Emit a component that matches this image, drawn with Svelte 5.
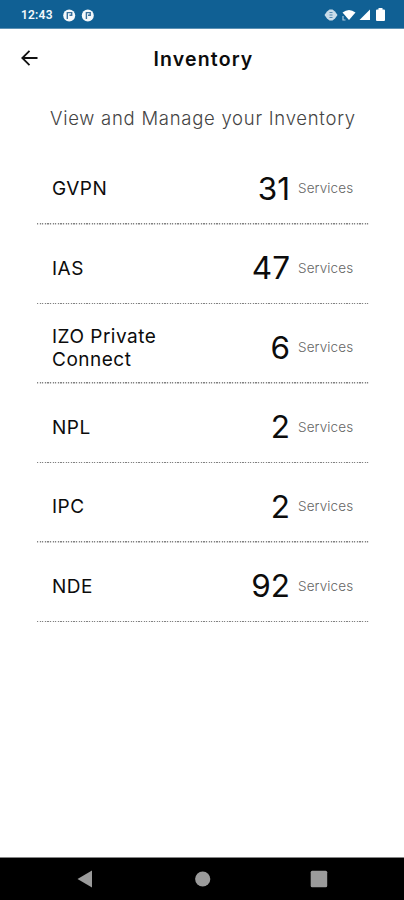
<script lang="ts">
  type Service = { name: string; count: number };

  const services: Service[] = [
    { name: 'GVPN', count: 31 },
    { name: 'IAS', count: 47 },
    { name: 'IZO Private Connect', count: 6 },
    { name: 'NPL', count: 2 },
    { name: 'IPC', count: 2 },
    { name: 'NDE', count: 92 }
  ];
</script>

<div class="screen">
  <div class="status-bar">
    <span class="time">12:43</span>
    <svg class="notifications" width="31" height="13" viewBox="0 0 31 13">
      <g fill="#f4f8fb">
        <circle cx="6.2" cy="6.5" r="6" />
        <circle cx="24.8" cy="6.5" r="6" />
      </g>
      <g fill="none" stroke="#3a719c" stroke-width="1.4">
        <path d="M4.300 10V3.600h4.400v2.600H6.500" />
        <path d="M23.400 10V3.600h3.800v2.600h-2.200" />
      </g>
    </svg>
    <svg class="system" width="62" height="16" viewBox="0 0 62 16">
      <path d="M.5 8L3 4.500 5.500 2.500h3L11 4.500 13.500 8 11 11.500 8.500 13.500h-3L3 11.500z" fill="#c9dce9" />
      <path d="M5.500 5.500h3M5.500 8h3M5.500 10.500h3" stroke="#5589ae" stroke-width="1" />
      <path d="M18.500 5.500Q25 .5 31.500 5.500L25 13z" fill="#fff" />
      <path d="M19 9v4h2.500" fill="none" stroke="#a9c8dd" stroke-width="1.200" />
      <path d="M46 2.500V13H35.500z" fill="#fff" />
      <path d="M54.500 1h4v1.500H60q1 0 1 1V13q0 1-1 1h-7q-1 0-1-1V3.500q0-1 1-1h1.500z" fill="#fff" />
    </svg>
  </div>

  <header class="header">
    <button class="back" type="button" aria-label="Back">
      <svg width="18" height="18" viewBox="0 0 18 18" fill="none" stroke="#111" stroke-width="1.8">
        <path d="M17.500 9H2.500M9.500 1.800L2.300 9l7.200 7.200" />
      </svg>
    </button>
    <h1>Inventory</h1>
  </header>

  <main>
    <p class="intro">View and Manage your Inventory</p>
    <ul class="list">
      {#each services as service}
        <li class="row">
          <span class="name">{service.name}</span>
          <span class="count">{service.count}</span>
          <span class="unit">Services</span>
        </li>
      {/each}
    </ul>
  </main>

  <nav class="nav-bar">
    <svg width="404" height="42" viewBox="0 0 404 42" fill="#9b9b9b">
      <path d="M77.500 21L92 12.500v17z" />
      <circle cx="202.700" cy="21" r="7.600" />
      <rect x="310.700" y="12.800" width="16.500" height="16.500" rx="1.500" />
    </svg>
  </nav>
</div>

<style>
  :global(body) {
    margin: 0;
    background: #fff;
  }
  .screen {
    display: flex;
    flex-direction: column;
    width: 404px;
    height: 900px;
    overflow: hidden;
    background: #fff;
    color: #0c0c0c;
    font-family: Inter, "Liberation Sans", sans-serif;
  }
  .status-bar {
    display: flex;
    align-items: center;
    box-sizing: border-box;
    flex: none;
    height: 29px;
    padding: 2px 18px 0 21px;
    background: #106094;
    border-bottom: 1px solid #5c91b4;
  }
  .time {
    width: 42px;
    color: #f4f8fb;
    font-family: Roboto, sans-serif;
    font-size: 12px;
    font-weight: 600;
    letter-spacing: 0.2px;
  }
  .system {
    margin-left: auto;
  }
  .header {
    display: grid;
    grid-template-columns: 60px 1fr 60px;
    align-items: center;
    flex: none;
    height: 59px;
  }
  .back {
    display: flex;
    padding: 0;
    margin: -2px 0 0 20px;
    border: none;
    background: transparent;
  }
  h1 {
    margin: 0 0 0 3px;
    text-align: center;
    font-size: 19.5px;
    font-weight: 600;
    line-height: 24px;
    letter-spacing: 1.15px;
  }
  main {
    flex: 1;
  }
  .intro {
    margin: 18px 0 15px;
    padding-left: 50px;
    color: #444;
    font-size: 18.5px;
    font-weight: 300;
    line-height: 24px;
    letter-spacing: 0.73px;
    white-space: nowrap;
  }
  .list {
    margin: 0 35px 0 37px;
    padding: 0;
    list-style: none;
  }
  .row {
    display: flex;
    align-items: center;
    box-sizing: border-box;
    height: 79.5px;
    padding: 8px 15px 0;
    background: repeating-linear-gradient(90deg, #828282 0 1.3px, #ebebeb 1.3px 2.6px) bottom / 100% 1.5px no-repeat;
  }
  .name {
    width: 125px;
    font-size: 19px;
    line-height: 23px;
    letter-spacing: 0.5px;
  }
  .count {
    margin-left: auto;
    font-size: 31.5px;
    line-height: 36px;
  }
  .unit {
    width: 56px;
    margin: -1px 0 0 8px;
    color: #666;
    font-size: 13.5px;
    font-weight: 300;
    letter-spacing: 0.1px;
  }
  .nav-bar {
    flex: none;
    height: 42px;
    background: #000;
    border-top: 1px solid #858585;
  }
  .nav-bar svg {
    display: block;
  }
</style>
